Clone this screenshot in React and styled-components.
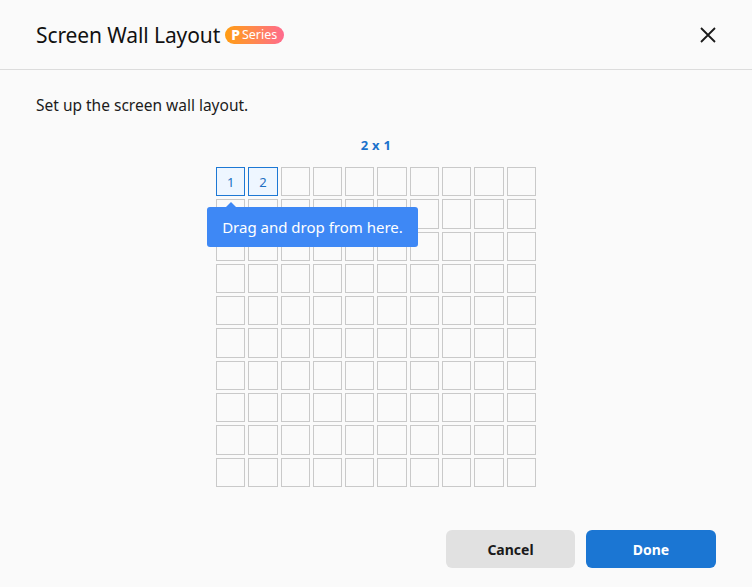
import React from "react";
import styled, { createGlobalStyle } from "styled-components";

const Global = createGlobalStyle`
  html, body { margin: 0; padding: 0; background: #fafafa; }
  body { font-family: "Noto Sans", "Open Sans", sans-serif; color: #1a1a1a; }
  * { box-sizing: border-box; }
`;

const Dialog = styled.div`
  width: 752px;
  height: 587px;
  background: #fafafa;
  display: flex;
  flex-direction: column;
`;

const Header = styled.div`
  height: 70px;
  display: flex;
  align-items: center;
  padding: 0 36px;
  border-bottom: 1px solid #dcdcdc;
`;

const Title = styled.h1`
  margin: 0;
  font-size: 21px;
  font-weight: 400;
  color: #111;
  letter-spacing: -0.1px;
`;

const Badge = styled.span`
  margin-left: 5px;
  margin-top: 1px;
  height: 18px;
  padding: 0 7px 0 6px;
  border-radius: 9px;
  background: linear-gradient(90deg, #ff9d12 0%, #ff8a4a 45%, #ff6a8e 100%);
  color: #fff;
  font-size: 12.5px;
  line-height: 18px;
  display: inline-flex;
  align-items: center;
  gap: 2px;
`;

const BadgeP = styled.b`
  font-weight: 800;
  font-size: 14px;
`;

const CloseBtn = styled.button`
  margin-left: auto;
  margin-right: -4px;
  border: 0;
  background: none;
  padding: 0;
  width: 24px;
  height: 24px;
  display: flex;
  align-items: center;
  justify-content: center;
  cursor: pointer;
`;

const Body = styled.div`
  flex: 1;
  padding: 24px 36px 0;
  display: flex;
  flex-direction: column;
`;

const Lead = styled.p`
  margin: 0;
  font-size: 15.5px;
  color: #1c1c1c;
`;

const GridArea = styled.div`
  margin-top: 20px;
  display: flex;
  flex-direction: column;
  align-items: center;
`;

const Size = styled.div`
  font-size: 13px;
  font-weight: 700;
  color: #1b72cc;
  margin-bottom: 13px;
  letter-spacing: 0.3px;
`;

const GridWrap = styled.div`
  position: relative;
`;

const Grid = styled.div`
  width: 320px;
  display: grid;
  grid-template-columns: repeat(10, 1fr);
  gap: 3px;
`;

const Cell = styled.div`
  height: 29.3px;
  border: 1.5px solid ${p => (p.$active ? "#1d78d4" : "#c9c9c9")};
  background: ${p => (p.$active ? "#eef6ff" : "transparent")};
  color: #1d6fc2;
  font-size: 13px;
  display: flex;
  align-items: center;
  justify-content: center;
`;

const Tooltip = styled.div`
  position: absolute;
  left: -9px;
  top: 40px;
  width: 211px;
  height: 40px;
  background: #3e88f5;
  color: #fff;
  border-radius: 3px;
  font-size: 15px;
  display: flex;
  align-items: center;
  justify-content: center;
  &::before {
    content: "";
    position: absolute;
    left: 18px;
    top: -5px;
    border-left: 6px solid transparent;
    border-right: 6px solid transparent;
    border-bottom: 6px solid #3e88f5;
  }
`;

const Footer = styled.div`
  display: flex;
  justify-content: flex-end;
  gap: 11px;
  padding: 0 36px 19px;
`;

const Button = styled.button`
  width: ${p => (p.$primary ? "130px" : "129px")};
  height: 38px;
  border: 0;
  border-radius: 6px;
  font-family: inherit;
  font-size: 14px;
  font-weight: 700;
  background: ${p => (p.$primary ? "#1b76d3" : "#e1e1e1")};
  color: ${p => (p.$primary ? "#fff" : "#1a1a1a")};
  cursor: pointer;
`;

export default function App() {
  const cells = Array.from({ length: 100 }, (_, i) => i);
  return (
    <>
      <Global />
      <Dialog>
        <Header>
          <Title>Screen Wall Layout</Title>
          <Badge>
            <BadgeP>P</BadgeP>Series
          </Badge>
          <CloseBtn aria-label="Close">
            <svg width="16" height="16" viewBox="0 0 16 16">
              <path d="M1 1L15 15M15 1L1 15" stroke="#1a1a1a" strokeWidth="1.8" fill="none" />
            </svg>
          </CloseBtn>
        </Header>
        <Body>
          <Lead>Set up the screen wall layout.</Lead>
          <GridArea>
            <Size>2 x 1</Size>
            <GridWrap>
              <Grid>
                {cells.map(i => (
                  <Cell key={i} $active={i < 2}>
                    {i < 2 ? i + 1 : ""}
                  </Cell>
                ))}
              </Grid>
              <Tooltip>Drag and drop from here.</Tooltip>
            </GridWrap>
          </GridArea>
        </Body>
        <Footer>
          <Button>Cancel</Button>
          <Button $primary>Done</Button>
        </Footer>
      </Dialog>
    </>
  );
}
